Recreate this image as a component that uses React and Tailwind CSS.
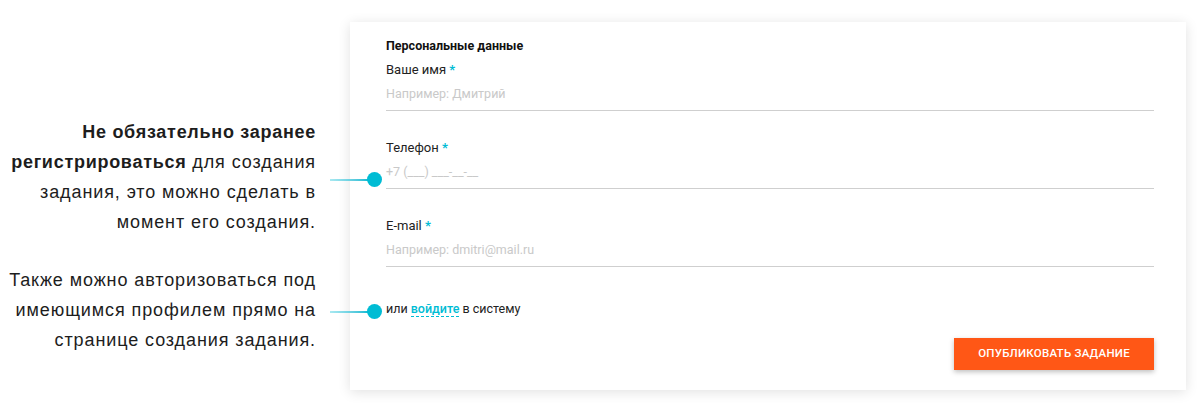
import React from "react";

function Field({ label, placeholder, className = "" }) {
  return (
    <div className={className}>
      <div className="h-4 text-[13px] leading-4 text-[#222]">
        {label} <span className="font-bold text-[#00bcd4]">*</span>
      </div>
      <div className="flex h-[33px] items-center border-b border-[#cfcfcf] text-[12.5px] text-[#c9c9c9]">
        {placeholder}
      </div>
    </div>
  );
}

function Pin({ top }) {
  return (
    <div className="absolute left-[-20px] flex items-center" style={{ top }}>
      <div className="h-[2px] w-[38px] bg-gradient-to-r from-[#a8e9f1] to-[#00bcd4]" />
      <div className="-ml-[1px] h-[15px] w-[15px] rounded-full bg-[#00bcd4]" />
    </div>
  );
}

export default function App() {
  return (
    <div className="flex h-[413px] w-[1200px] items-start bg-white">
      {/* подсказки слева */}
      <div
        className="w-[316px] shrink-0 pt-[117px] text-right text-[18px] leading-[30px] tracking-[0.05em] text-[#1d1d1d]"
        style={{ fontFamily: '"Liberation Sans", Arial, sans-serif' }}
      >
        <p>
          <b className="font-bold tracking-[0.04em]">Не обязательно заранее регистрироваться</b> для
          создания задания, это можно сделать в момент его создания.
        </p>
        <p className="mt-[28px]">
          Также можно авторизоваться под имеющимся профилем прямо на странице создания
          задания.
        </p>
      </div>

      <div
        className="relative ml-[34px] mt-[22px] w-[836px] bg-white pb-5 pl-9 pr-8 pt-4 shadow-[0_2px_12px_rgba(0,0,0,0.12)]"
        style={{ fontFamily: 'Roboto, "Liberation Sans", sans-serif' }}
      >
        <div className="h-4 text-[12.5px] font-bold leading-4 text-[#111]">
          Персональные данные
        </div>
        <Field className="mt-2" label="Ваше имя" placeholder="Например: Дмитрий" />
        <Field className="mt-[29px]" label="Телефон" placeholder="+7 (___) ___-__-__" />
        <Field className="mt-[29px]" label="E-mail" placeholder="Например: dmitri@mail.ru" />

        <div className="mt-[34px] h-4 text-[12.5px] leading-4 text-[#222]">
          или{" "}
          <a className="border-b border-dashed border-[#00bcd4] font-medium text-[#00bcd4]">
            войдите
          </a>{" "}
          в систему
        </div>

        <div className="mt-[21px] flex justify-end">
          <button className="h-8 w-[200px] bg-[#ff5716] text-[11.5px] font-medium uppercase tracking-[0.02em] text-white shadow-[0_2px_5px_rgba(0,0,0,0.25)]">
            Опубликовать задание
          </button>
        </div>

        <Pin top={150} />
        <Pin top={282} />
      </div>
    </div>
  );
}
